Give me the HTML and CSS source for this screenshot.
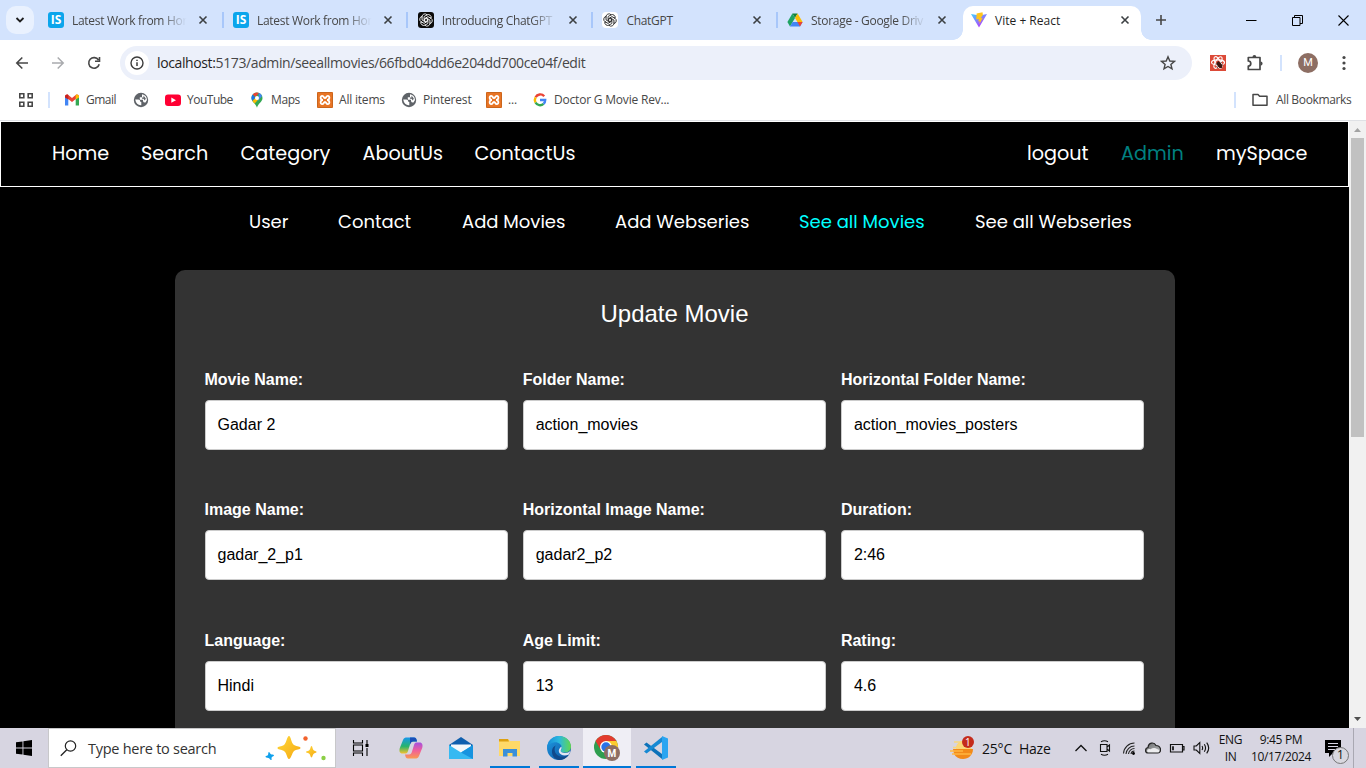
FILE: index.html
```html
<!DOCTYPE html>
<html lang="en">
<head>
<meta charset="utf-8">
<title>Vite + React</title>
<link rel="stylesheet" href="styles.css">
</head>
<body>
<svg class="defs" width="0" height="0" aria-hidden="true">
  <defs>
    <symbol id="x" viewBox="0 0 10 10"><path d="M1.500 1.500l7 7M8.500 1.500l-7 7" stroke="#3c4043" stroke-width="1.600" fill="none"/></symbol>
    <symbol id="globe" viewBox="0 0 16 16"><circle cx="8" cy="8" r="7.200" fill="#5f6368"/><path d="M2.200 7.500H5.500q2 .2 1.800 2.300l1 .2v3.200q-5 .3-6.100-5.700" fill="#fff"/><path d="M9 2.300q4.600.8 5 5.700l-1.500 2.500q-2.200.3-2.500-1.500v-1.200H6.800V5.300h2.200z" fill="#fff"/><path d="M10.500 3.500l2.300 3-1 2-1.300-1.800H9V5.400h1.500z" fill="#5f6368"/></symbol>
    <symbol id="xampp" viewBox="0 0 16 16"><rect width="16" height="16" rx="1" fill="#e87424"/><rect x=".5" y=".5" width="15" height="15" rx="1" fill="none" stroke="#c9651d"/><path d="M6 8C3 8 3 3.800 5.200 3.800 7 3.800 6.500 6 8 6S9 3.800 10.800 3.800C13 3.800 13 8 10 8 13 8 13 12.200 10.800 12.200 9 12.200 9.500 10 8 10s-1 2.200-2.800 2.200C3 12.200 3 8 6 8" stroke="#fff" stroke-width="1.800" fill="none"/></symbol>
    <symbol id="knot" viewBox="0 0 16 16"><g fill="none" stroke="currentColor" stroke-width=".95"><path id="petal" d="M3.500 5V4.200A3.300 3.300 0 0 1 9.200 2L5.800 4.100V8.500L8 9.900"/><use href="#petal" transform="rotate(60 8 8)"/><use href="#petal" transform="rotate(120 8 8)"/><use href="#petal" transform="rotate(180 8 8)"/><use href="#petal" transform="rotate(240 8 8)"/><use href="#petal" transform="rotate(300 8 8)"/></g></symbol>
    <linearGradient id="vite" x1="0" y1="0" x2=".7" y2="1"><stop offset="0" stop-color="#41d1ff"/><stop offset="1" stop-color="#bd34fe"/></linearGradient>
    <linearGradient id="gold" x1="0" y1="0" x2="1" y2="1"><stop offset="0" stop-color="#ffd83a"/><stop offset="1" stop-color="#f5a812"/></linearGradient>
    <linearGradient id="copA" x1="0" y1="0" x2="0" y2="1"><stop offset="0" stop-color="#1797ec"/><stop offset=".55" stop-color="#27b46c"/><stop offset="1" stop-color="#f5c12d"/></linearGradient>
    <linearGradient id="copB" x1="0" y1="0" x2="0" y2="1"><stop offset="0" stop-color="#a550e0"/><stop offset=".5" stop-color="#f0609a"/><stop offset="1" stop-color="#fa9a50"/></linearGradient>
    <linearGradient id="edgeA" x1="0" y1="0" x2="1" y2="0"><stop offset="0" stop-color="#1689d8"/><stop offset=".5" stop-color="#2bb8df"/><stop offset="1" stop-color="#63d84b"/></linearGradient>
    <linearGradient id="edgeB" x1="0" y1="0" x2="1" y2="1"><stop offset="0" stop-color="#1f9de5"/><stop offset="1" stop-color="#0c4e9c"/></linearGradient>
    <linearGradient id="cloud" x1="0" y1="0" x2="1" y2="1"><stop offset="0" stop-color="#6c6e70"/><stop offset="1" stop-color="#b5b6b8"/></linearGradient>
  </defs>
</svg>

<header class="tabstrip">
  <button class="tabsearch"><svg width="10" height="8" viewBox="0 0 10 8"><path d="M1.500 2L5 5.500 8.500 2" stroke="#1f1f1f" stroke-width="1.800" fill="none"/></svg></button>
  <div class="tabs">
    <div class="tab"><svg class="fav" viewBox="0 0 16 16"><rect width="16" height="16" rx="3" fill="#0ba5ec"/></svg><b class="is">IS</b><span class="t fade">Latest Work from Hor</span><svg class="close"><use href="#x"/></svg></div>
    <div class="tab"><svg class="fav" viewBox="0 0 16 16"><rect width="16" height="16" rx="3" fill="#0ba5ec"/></svg><b class="is">IS</b><span class="t fade">Latest Work from Hor</span><svg class="close"><use href="#x"/></svg></div>
    <div class="tab"><svg class="fav light" viewBox="0 0 16 16"><rect width="16" height="16" rx="3" fill="#0b0b0b"/><use href="#knot" width="14" height="14" x="1" y="1"/></svg><span class="t fade">Introducing ChatGPT</span><svg class="close"><use href="#x"/></svg></div>
    <div class="tab"><svg class="fav dark" viewBox="0 0 16 16"><rect width="16" height="16" rx="4" fill="#fff"/><use href="#knot" width="14" height="14" x="1" y="1"/></svg><span class="t">ChatGPT</span><svg class="close"><use href="#x"/></svg></div>
    <div class="tab last"><svg class="fav" viewBox="0 0 16 16"><path d="M5.400 1.400h5.200L8 6z" fill="#188038"/><path d="M5.400 1.400L.4 10l2.600 4.400L8 6z" fill="#1ea362"/><path d="M10.600 1.400L15.600 10h-5.200L8 6z" fill="#fbbc04"/><path d="M3 14.400L5.600 10H15.600L13 14.400z" fill="#4285f4"/><path d="M10.400 10h5.200L13 14.400z" fill="#ea4335"/></svg><span class="t fade">Storage - Google Driv</span><svg class="close"><use href="#x"/></svg></div>
    <div class="tab active"><svg class="fav" viewBox="0 0 16 16"><path d="M0 2L8 15.500 16 2 8.500 3.500z" fill="url(#vite)"/><path d="M11.500.2L5.600 1.400 5.300 7.500 7.800 7 7.300 9.500 8.800 9.200 8.300 12.300 11.700 6 9.700 6.300 11.900 3z" fill="#ffc51e"/></svg><span class="t">Vite + React</span><svg class="close"><use href="#x"/></svg></div>
  </div>
  <svg class="plus" width="12" height="12" viewBox="0 0 12 12"><path d="M6 1v10M1 6h10" stroke="#474747" stroke-width="1.600"/></svg>
  <div class="winctl">
    <svg width="11" height="11" viewBox="0 0 11 11"><path d="M0 5.500h10.500" stroke="#000"/></svg>
    <svg width="11" height="11" viewBox="0 0 11 11"><path d="M.5 2.500h7.500v8H.5zM2.500 2.500v-2h8v8H8" stroke="#000" fill="none"/></svg>
    <svg width="11" height="11" viewBox="0 0 11 11"><path d="M.5.5l10 10M10.500.5l-10 10" stroke="#000" stroke-width="1.100"/></svg>
  </div>
</header>

<div class="toolbar">
  <div class="navbtns">
    <svg width="14" height="14" viewBox="0 0 14 14"><path d="M13 7H2M7.300 1.500L1.800 7l5.500 5.500" stroke="#474747" stroke-width="1.600" fill="none"/></svg>
    <svg width="14" height="14" viewBox="0 0 14 14"><path d="M1 7h11M6.700 1.500L12.200 7l-5.500 5.500" stroke="#a9abae" stroke-width="1.500" fill="none"/></svg>
    <svg width="14" height="14" viewBox="0 0 14 14"><path d="M12.200 8.200A5.300 5.300 0 1 1 11.500 4M12.500 1v4.300H8" stroke="#474747" stroke-width="1.600" fill="none"/></svg>
  </div>
  <div class="omnibox">
    <span class="info"><svg width="14" height="14" viewBox="0 0 14 14"><circle cx="7" cy="7" r="6" stroke="#3c3c3c" stroke-width="1.400" fill="none"/><path d="M7 6.300V10M7 3.700v1.400" stroke="#3c3c3c" stroke-width="1.500"/></svg></span>
    <span class="url"><span>localhost:</span>5173/admin/seeallmovies/66fbd04dd6e204dd700ce04f/edit</span>
    <svg class="star" width="16" height="16" viewBox="0 0 16 16"><path d="M8 1.800L9.800 6l4.600.4-3.500 3 1.100 4.500L8 11.500l-4 2.400 1.100-4.500-3.500-3L6.200 6z" stroke="#474747" stroke-width="1.400" fill="none"/></svg>
  </div>
  <svg class="ext" width="16" height="16" viewBox="0 0 16 16"><rect width="16" height="16" fill="#dc4a38"/><g fill="none" stroke="#fff" stroke-width="1.100"><ellipse cx="8" cy="7.500" rx="6.500" ry="2.600"/><ellipse cx="8" cy="7.500" rx="6.500" ry="2.600" transform="rotate(60 8 7.500)"/><ellipse cx="8" cy="7.500" rx="6.500" ry="2.600" transform="rotate(120 8 7.500)"/></g><ellipse cx="9.500" cy="10" rx="2" ry="3.600" fill="#3a1712" transform="rotate(-35 9.500 10)"/><path d="M5.500 9l7.500 1M7 13l4.500-6M8 6l4 7" stroke="#3a1712" stroke-width=".8"/></svg>
  <svg class="puzzle" width="18" height="18" viewBox="0 0 18 18"><path d="M2.300 3.500h11.700v12H2.300v-3.500a2.400 2.400 0 0 0 0-5z" stroke="#474747" stroke-width="1.700" fill="none" stroke-linejoin="round"/><path d="M6.500 3a1.900 1.900 0 0 1 3.800 0zM14.500 7.500a2.100 2.100 0 0 1 0 4.200z" fill="#474747"/></svg>
  <i class="bar"></i>
  <span class="avatar">M</span>
  <svg class="dots" width="4" height="16" viewBox="0 0 4 16"><circle cx="2" cy="2.500" r="1.600" fill="#474747"/><circle cx="2" cy="8" r="1.600" fill="#474747"/><circle cx="2" cy="13.500" r="1.600" fill="#474747"/></svg>
</div>

<div class="bookmarks">
  <svg class="apps" width="16" height="16" viewBox="0 0 16 16"><path d="M1.800 1.800h4v4h-4zM10.200 1.800h4v4h-4zM1.800 10.200h4v4h-4zM10.200 10.200h4v4h-4z" stroke="#474747" stroke-width="1.600" fill="none"/></svg>
  <i class="bar"></i>
  <div class="marks">
    <span><svg viewBox="0 0 16 16"><path d="M0 4v9.500h3.300V7z" fill="#4285f4"/><path d="M14 4v9.500h-3.300V7z" fill="#34a853"/><path d="M0 4.500C0 2.600 2 2 3.300 3L7 6l3.700-3C12 2 14 2.600 14 4.500L7 10z" fill="#ea4335"/><path d="M10.700 3C12 2 14 2.600 14 4.500V5.500l-3.300 2z" fill="#fbbc04"/><path d="M0 4.500C0 3 2 2 3.300 3v4.500L0 5.500z" fill="#c5221f"/></svg>Gmail</span>
    <span><svg viewBox="0 0 16 16"><use href="#globe"/></svg></span>
    <span><svg viewBox="0 0 16 16"><rect y="2.500" width="16" height="11.500" rx="3" fill="#f03"/><path d="M6.300 5.500v5.300L11 8.200z" fill="#fff"/></svg>YouTube</span>
    <span><svg viewBox="0 0 16 16"><path d="M8 .5A5.500 5.500 0 0 0 2.500 6c0 4 4.500 5.500 5.500 9.800C9 11.500 13.500 10 13.500 6A5.500 5.500 0 0 0 8 .5" fill="#34a853"/><path d="M8 .5A5.500 5.500 0 0 0 3.700 2.600L6.400 5 10 1z" fill="#ea4335"/><path d="M9.700.8A5.500 5.500 0 0 1 13 4L8.500 9.500 9.700 5z" fill="#4285f4"/><path d="M3.700 2.600A5.500 5.500 0 0 0 3.400 9L6.400 6z" fill="#1a73e8"/><path d="M3.400 9L5.700 11.600 9.700 7 6.300 6z" fill="#fbbc04"/><circle cx="8" cy="6" r="2" fill="#fff"/></svg>Maps</span>
    <span><svg viewBox="0 0 16 16"><use href="#xampp"/></svg>All items</span>
    <span><svg viewBox="0 0 16 16"><use href="#globe"/></svg>Pinterest</span>
    <span><svg viewBox="0 0 16 16"><use href="#xampp"/></svg>...</span>
    <span><svg viewBox="0 0 16 16"><g fill="none" stroke-width="2.400"><path d="M12.200 4.200A5.200 5.200 0 0 0 3.600 5.300" stroke="#ea4335"/><path d="M3.600 5.300A5.200 5.200 0 0 0 3.500 10.500" stroke="#fbbc04"/><path d="M3.500 10.500A5.200 5.200 0 0 0 11.500 11.900" stroke="#34a853"/><path d="M11.500 11.900A5.200 5.200 0 0 0 13.200 8H8" stroke="#4285f4"/></g></svg>Doctor G Movie Rev...</span>
  </div>
  <i class="bar"></i>
  <span class="all"><svg width="16" height="14" viewBox="0 0 16 14"><path d="M1 12.200V1.500h5l1.600 1.700H15v9z" stroke="#474747" stroke-width="1.500" fill="none" stroke-linejoin="round"/></svg>All Bookmarks</span>
</div>

<div class="viewport">
  <main class="page">
    <nav class="mainnav">
      <div class="left"><a>Home</a><a>Search</a><a>Category</a><a>AboutUs</a><a>ContactUs</a></div>
      <div class="right"><a>logout</a><a class="teal">Admin</a><a>mySpace</a></div>
    </nav>
    <nav class="subnav"><a>User</a><a>Contact</a><a>Add Movies</a><a>Add Webseries</a><a class="cyan">See all Movies</a><a>See all Webseries</a></nav>
    <section class="card">
      <h2>Update Movie</h2>
      <form class="grid">
        <label>Movie Name:<span class="field">Gadar 2</span></label>
        <label>Folder Name:<span class="field">action_movies</span></label>
        <label>Horizontal Folder Name:<span class="field">action_movies_posters</span></label>
        <label>Image Name:<span class="field">gadar_2_p1</span></label>
        <label>Horizontal Image Name:<span class="field">gadar2_p2</span></label>
        <label>Duration:<span class="field">2:46</span></label>
        <label>Language:<span class="field">Hindi</span></label>
        <label>Age Limit:<span class="field">13</span></label>
        <label>Rating:<span class="field">4.6</span></label>
      </form>
    </section>
  </main>
  <div class="scrollbar">
    <svg width="17" height="17" viewBox="0 0 17 17"><path d="M5 11h7L8.500 7z" fill="#a3a3a3"/></svg>
    <div class="thumb"></div>
    <svg width="17" height="17" viewBox="0 0 17 17"><path d="M5 6h7L8.500 10z" fill="#505050"/></svg>
  </div>
</div>

<footer class="taskbar">
  <div class="start"><svg width="16" height="16" viewBox="0 0 16 16"><path d="M0 2.300L6.500 1.400V7.500H0zM7.400 1.200L16 0v7.500H7.400zM0 8.400h6.500v6.200L0 13.700zM7.400 8.400H16V16L7.400 14.800z"/></svg></div>
  <div class="search">
    <svg width="17" height="17" viewBox="0 0 17 17"><circle cx="10.500" cy="6" r="5.200" stroke="#222" stroke-width="1.200" fill="none"/><path d="M6.800 9.800L.8 15.800" stroke="#222" stroke-width="1.300"/></svg>
    <span>Type here to search</span>
    <svg class="sparkle" width="62" height="26" viewBox="0 0 62 26"><path d="M24 1C26 1 26 8 29 10S35.500 11 35.500 13 31 14 29 16s-3 8-5 8-2-6-5-8-6.500-1-6.500-3 4-1 6.500-3 3-9 5-9" fill="url(#gold)"/><path d="M46.500 11c1 0 1 3.500 2.500 4.500s2.500.5 2.500 1.500-1 .6-2.500 1.600-1.500 3.900-2.500 3.900-1-3-2.500-4-3-.5-3-1.500 1.500-.5 3-1.500 1.500-4.500 2.500-4.500" fill="url(#gold)"/><path d="M4 17c1 0 1 2.500 2.500 2.500S9 19.500 9 20.500s-2.500 1-2.500 2.500S7 25 6 25s-1-1.500-2.500-2S0 22.500.5 21.500s2-.5 2.500-1.500 0-3 1-3" fill="#0fa0ec"/><circle cx="40.500" cy="3.500" r="2.200" fill="#f2622d"/><circle cx="58.500" cy="23" r="2.200" fill="#8ccf46"/></svg>
  </div>
  <div class="apps-row">
    <div class="app first"><svg width="18" height="16" viewBox="0 0 18 16"><path d="M1.500 0v3h9V0M1.500 16v-3h9v3M1.500 5h9v6h-9zM15 0v4M15 8v8" stroke="#000" stroke-width="1.100" fill="none"/><rect x="13.500" y="4" width="3" height="3"/></svg></div>
    <div class="app wide"><svg width="24" height="24" viewBox="0 0 24 24"><path d="M8 1.500h7c2 0 2.500 1.500 3 4h-4c-1.500 0-2.500 1-3 3L9 15c-.5 2-1.500 2.500-3 2.500H3.500C.5 17.500 0 15 .8 12L4 4c.8-2 2-2.500 4-2.500" fill="url(#copA)"/><path d="M11 1.500h4c2 0 2.500 1.500 3 4h-4c-1.500 0-2 1-3 3z" fill="#1a4fb8"/><path d="M16 22.500H9c-2 0-2.500-1.500-3-4h4c1.500 0 2.500-1 3-3L15 9c.5-2 1.500-2.500 3-2.500h2.500c3 0 3.500 2.500 2.700 5.500L20 20c-.8 2-2 2.500-4 2.500" fill="url(#copB)"/></svg></div>
    <div class="app"><svg width="24" height="24" viewBox="0 0 24 24"><path d="M0 9L12 1l12 8v14H0z" fill="#0f5fae"/><path d="M2 8.500h20V17H2z" fill="#f4f7fa"/><path d="M0 9l12 7.500L24 9v14H0z" fill="#36b9f2"/><path d="M24 9v14L12 16.500z" fill="#1793df"/></svg></div>
    <div class="app run"><svg width="24" height="24" viewBox="0 0 24 24"><path d="M1 3h9l2 2h10v15H1z" fill="#ffd968"/><path d="M1 3h9l1 2.500H1z" fill="#dda010"/><path d="M5 20.500v-7.500h14v7.500h-4.500V17h-5v3.500z" fill="#3b8fd9"/></svg></div>
    <div class="app run"><svg width="24" height="24" viewBox="0 0 24 24"><circle cx="12" cy="12" r="12" fill="url(#edgeB)"/><path d="M0 11.500C1 4.500 6 0 12.200 0 19.500 0 24 5.500 24 10.500c0 4-3 6-6.500 6-2.500 0-4-.8-3.800-1.800.2-.8 1.200-1.200 1.200-3C14.900 9 12 6.300 8 6.300 4.500 6.300 1.500 8.500 0 11.500" fill="url(#edgeA)"/><path d="M8.800 9.500c-1.600 2-1.600 6 .5 8.500 2.600 3.200 7.500 4 12.200.8-2 3.500-6 5.200-9.500 5.200C7 23.500 4.500 18.500 5 14.500c.3-2.500 2-4.300 3.800-5" fill="#114a8b"/><path d="M13.700 14.700c-.2 1 1.300 2.300 4.300 2.300 2.500 0 4-.8 5.300-2.200-.3 1.800-1 3-1.800 4-4 1.500-8.500.5-9.500-2.500-.7-2 .3-4.500 2.500-5.800.5 2-.5 3-.8 4.200" fill="#e2e6f2"/></svg></div>
    <div class="app run current"><svg width="28" height="26" viewBox="0 0 28 26"><circle cx="13" cy="12" r="12" fill="#2f9e4f"/><path d="M13 6h10.400A12 12 0 0 1 13 24l5.200-9z" fill="#fccb2f"/><path d="M2.600 6A12 12 0 0 1 23.400 6H13L7.800 15z" fill="#e33b2e"/><circle cx="13" cy="12" r="6" fill="#fff"/><circle cx="13" cy="12" r="4.700" fill="#2a72e8"/><circle cx="19" cy="18" r="8" fill="#8d6e63"/></svg><b class="badge">M</b></div>
    <div class="app run"><svg width="24" height="24" viewBox="0 0 24 24"><path d="M0 8.500L2.500 6.500 18 18V23z" fill="#0d72b9"/><path d="M0 15.500l2.500 2L18 6V1z" fill="#1689d3"/><path d="M18 0l6 2.500v19L18 24z" fill="#2aa5f1"/></svg></div>
  </div>
  <div class="tray">
    <svg class="weather" width="25" height="24" viewBox="0 0 25 24"><path d="M3 13h20c0 6-4.500 10-10 10-4 0-7-1.500-9-5z" fill="#f28a1a"/><path d="M6 11C7 7 11 4 15 5l7 8H6z" fill="#ffd670"/><path d="M4 6h9M8 9h6M3 11.500h16" stroke="#f7d77c" stroke-width="1.700"/><path d="M0 15h13M2 18h19" stroke="#ffb640" stroke-width="1.700"/><circle cx="18" cy="6" r="6" fill="#c42b1c"/></svg><b class="count">1</b>
    <span class="temp">25°C&nbsp; Haze</span>
    <div class="sys">
      <svg width="14" height="16" viewBox="0 0 14 16"><path d="M1.500 11L7 5.500l5.500 5.500" stroke="#111" stroke-width="1.300" fill="none"/></svg>
      <svg width="14" height="16" viewBox="0 0 14 16"><path d="M3 1.800Q6.500-.2 10 1.800M3 14.200Q6.500 16.200 10 14.200M2.500 4.500h6.500v7H2.500zM9 7l2.500-2v6L9 9" stroke="#111" stroke-width="1.100" fill="none"/></svg>
      <svg width="14" height="16" viewBox="0 0 14 16"><path d="M1.500 13.500A11 11 0 0 1 12.500 3M4 14a8.500 8.500 0 0 1 8.500-8M6.500 14a6 6 0 0 1 6-5.500M9 14a3.500 3.500 0 0 1 3.500-3" stroke="#222" stroke-width="1.100" fill="none"/><circle cx="11.500" cy="13.500" r="1.400"/></svg>
      <svg width="16" height="16" viewBox="0 0 16 16"><path d="M3 13C-.2 13-.2 8 3 7.500 3.500 2.500 9 1.500 11 5.500 16.800 6 16.800 13 12.500 13z" fill="url(#cloud)" stroke="#222" stroke-width="1.200"/><path d="M2 11.300Q2 8.500 5.500 9.300 9 7 12 9q3 .5 2 3.200H3z" fill="#ececee"/></svg>
      <svg width="16" height="16" viewBox="0 0 16 16"><path d="M1.500 4.500h12v7.500h-12zM13.500 6.500h1.500v3.500h-1.500" stroke="#111" fill="none" stroke-width="1.200"/><path d="M3.200 6.200h1.600v4H3.200z"/></svg>
      <svg width="18" height="16" viewBox="0 0 18 16"><path d="M1 6h2.300L6.800 2.500v11L3.300 10H1zM9 6q1.300 2 0 4M11.300 4.300q2.500 3.700 0 7.400M13.700 2.700q4 5.300 0 10.600" stroke="#111" stroke-width="1.100" fill="none"/></svg>
    </div>
    <div class="lang"><span>ENG</span><span>IN</span></div>
    <div class="clock"><span>9:45 PM</span><span>10/17/2024</span></div>
    <div class="note"><svg width="26" height="28" viewBox="0 0 26 28"><path d="M0 1h16v13H8l-4 4v-4H0z"/><path d="M3 4.500h10M3 7.500h10M3 10.500h7" stroke="#d8d6e3" stroke-width="1.100"/><circle cx="15.500" cy="16.500" r="8" fill="#d9d8df" stroke="#777"/></svg><span>1</span></div>
    <i class="peek"></i>
  </div>
</footer>
</body>
</html>
```
FILE: styles.css
```css
* { box-sizing: border-box; }
body { margin: 0; width: 1366px; height: 768px; overflow: hidden; display: flex; flex-direction: column; background: #fff; font-family: "Segoe UI", "Open Sans", "Noto Sans", sans-serif; font-size: 12px; color: #474747; }
svg { display: block; flex: none; }
.defs { position: absolute; }

.tabstrip { height: 40px; flex: none; background: #d3e3fd; display: flex; align-items: center; padding-left: 6px; }
.tabsearch { width: 28px; height: 28px; border: 0; padding: 0; border-radius: 10px; background: #e9f1fe; display: grid; place-items: center; }
.tabs { display: flex; margin-left: 6px; align-self: flex-end; }
.tab { width: 184.700px; height: 34px; padding-left: 8px; display: flex; align-items: center; position: relative; padding-bottom: 6px; }
.tab::after { content: ""; position: absolute; right: 1.500px; top: 6px; width: 2px; height: 16px; background: #a8c7fa; }
.tab.last::after, .tab.active::after { display: none; }
.tab .fav { width: 16px; height: 16px; }
.light { color: #fff; }
.dark { color: #222; }
.is { position: absolute; left: 8px; top: 6px; width: 16px; text-align: center; color: #fff; font: bold 12px/16px "Open Sans", sans-serif; }
.t { width: 117px; margin-left: 8px; margin-right: -1px; padding-top: 1px; white-space: nowrap; line-height: 18px; letter-spacing: -.3px; }
.fade { -webkit-mask-image: linear-gradient(90deg, #000 76%, transparent 98%); mask-image: linear-gradient(90deg, #000 76%, transparent 98%); }
.close { width: 10px; height: 10px; margin-left: 10px; }
.tab:nth-child(1) { width: 185px; }
.tab.last { width: 184px; }
.tab.active { width: 178px; background: #fff; border-radius: 10px 10px 0 0; color: #1f1f1f; }
.tab.active .t { letter-spacing: 0; }
.tab.active .close { margin-left: 9px; }
.tab.active::before { content: ""; position: absolute; left: -10px; right: -10px; bottom: 0; height: 10px; background: radial-gradient(circle at 0 0, transparent 9.500px, #fff 10px) left / 10px 10px no-repeat, radial-gradient(circle at 100% 0, transparent 9.500px, #fff 10px) right / 10px 10px no-repeat; }
.plus { margin-left: 14px; }
.winctl { display: flex; gap: 35px; margin-left: auto; padding-right: 17px; }

.toolbar { height: 40px; flex: none; display: flex; align-items: center; padding-top: 6px; background: #fff; }
.navbtns { display: flex; gap: 22px; width: 120px; padding-left: 15px; }
.omnibox { width: 1072px; height: 34px; border-radius: 17px; background: #ecf0fa; display: flex; align-items: center; padding: 0 16px 0 5px; }
.info { width: 24px; height: 24px; border-radius: 50%; background: #fff; display: grid; place-items: center; }
.url { margin-left: 8px; padding-bottom: 1px; font-size: 14px; letter-spacing: -.38px; color: #474747; }
.url span { color: #1f1f1f; }
.star { margin-left: auto; }
.ext { margin-left: 18px; }
.puzzle { margin-left: 20px; }
.bar { width: 2px; height: 16px; background: #d3e3fd; flex: none; }
.puzzle + .bar { margin-left: 16px; }
.avatar { width: 20px; height: 20px; margin-left: 16px; border-radius: 50%; background: #8d6e63; color: #fff; text-align: center; font: 11px/20px Roboto, sans-serif; }
.dots { margin-left: 24px; }

.bookmarks { height: 41px; flex: none; border-bottom: 1px solid #dfe1e5; display: flex; align-items: center; }
.apps { margin-left: 18px; }
.apps + .bar { margin-left: 14px; }
.marks { display: grid; grid-template-columns: 68px 32px 84px 68px 84px 85px 46px 150px; margin-left: 15px; }
.marks span { display: flex; align-items: center; height: 17px; line-height: 16px; padding-bottom: 1px; white-space: nowrap; letter-spacing: -.2px; }
.marks span:nth-child(1), .marks span:nth-child(3) { letter-spacing: -.5px; }
.marks span:nth-child(4) { letter-spacing: -.4px; }
.marks svg { width: 16px; height: 16px; margin-right: 6px; }
.marks span:first-child svg { margin-right: 5px; }
.marks + .bar { margin-left: auto; }
.all { display: flex; align-items: center; gap: 8px; width: 130px; padding-left: 16px; white-space: nowrap; letter-spacing: -.35px; line-height: 16px; padding-bottom: 1px; }

.viewport { height: 607px; flex: none; display: flex; overflow: hidden; }
.page { width: 1349px; background: #000; }
.mainnav { height: 66px; border: 1px solid #fff; display: flex; justify-content: space-between; align-items: center; padding: 0 41px 2px 51px; font-family: Poppins, sans-serif; font-size: 19.200px; color: #fff; }
.mainnav div { display: grid; column-gap: 32px; }
.mainnav a, .subnav a { white-space: nowrap; }
.left { grid-template-columns: 57px 67.500px 90px 80px 101px; }
.right { grid-template-columns: 62px 63px 91px; }
.teal { color: #008080; }
.cyan { color: #0ff; }
.subnav { height: 68px; display: grid; align-items: center; grid-template-columns: 39px 74px 103px 134px 126px 157px; column-gap: 50px; padding-left: 249px; font-family: Poppins, sans-serif; font-size: 18px; color: #fff; }
.card { width: 1000px; height: 900px; margin: 15px auto 0; border-radius: 10px; background: #333; padding: 30px; font-family: Arial, "Liberation Sans", sans-serif; color: #fff; }
.card h2 { margin: 0; font-size: 24px; font-weight: 400; line-height: 28px; text-align: center; }
.grid { display: grid; grid-template-columns: repeat(3, 303.200px); column-gap: 15px; row-gap: 50px; margin-top: 43px; }
.grid label { font-size: 16px; font-weight: 700; line-height: 18px; height: 80.400px; }
.field { display: flex; align-items: center; height: 50px; margin-top: 11px; padding: 0 12px; border: 1px solid #ccc; border-radius: 4px; background: #fff; color: #000; font-weight: 400; }
.scrollbar { width: 17px; background: #f1f1f1; display: flex; flex-direction: column; }
.thumb { width: 13px; height: 299px; margin: 0 2px auto; background: #c1c1c1; }

.taskbar { height: 40px; flex: none; display: flex; background: #d7d5e1; color: #111; }
.start { width: 48px; display: grid; place-items: center; }
.search { width: 288px; background: #fff; border: 1px solid #c8c8ca; display: flex; align-items: center; padding-left: 11px; font-size: 14.500px; color: #333; }
.search span { width: 166px; margin-left: 11px; letter-spacing: -.27px; white-space: nowrap; }
.sparkle { margin-left: 11px; }
.apps-row { display: flex; }
.app { width: 49px; position: relative; display: grid; place-items: center; }
.app.wide { width: 51px; }
.app.run::after { content: ""; position: absolute; left: 5px; right: 4px; bottom: 0; height: 2px; background: #0078d7; }
.app.current { width: 48px; background: #efeef5; }
.app.current::after { left: 0; right: 0; }
.badge { position: absolute; left: 20px; top: 18px; width: 18px; text-align: center; font: bold 10px/16px Roboto, sans-serif; color: #fff; }
.tray { margin-left: auto; display: flex; align-items: center; position: relative; width: 416px; }
.count { position: absolute; left: 15px; top: 7px; width: 6px; color: #fff; font: 10px/14px "Open Sans", sans-serif; }
.temp { width: 92px; margin-left: 7px; font-size: 14px; letter-spacing: -.2px; white-space: nowrap; }
.sys { display: flex; gap: 10px; align-items: center; width: 140px; }
.sys svg:nth-child(4) { margin-left: -1px; }
.sys svg:nth-child(n+5) { margin-left: -2px; }
.lang, .clock { display: flex; flex-direction: column; align-items: center; line-height: 17px; white-space: nowrap; letter-spacing: -.35px; padding-bottom: 1px; }
.lang { width: 33px; }
.clock { width: 68px; }
.note { position: relative; margin-left: 10px; width: 28px; height: 28px; padding-top: 5px; }
.note span { position: absolute; left: 12px; top: 12px; font-size: 12px; line-height: 18px; }
.peek { align-self: stretch; width: 1px; background: #a9a8b2; }
```
